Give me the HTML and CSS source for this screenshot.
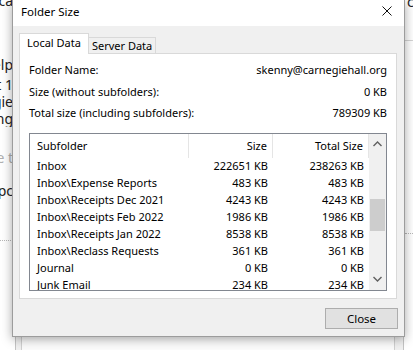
FILE: index.html
```html
<!DOCTYPE html>
<html lang="en">

<head>
  <title>Folder Size</title>
  <meta charset="UTF-8" />
  <meta name="viewport" content="width=device-width,initial-scale=1" />
  <link rel="stylesheet" href="styles.css">
</head>

<body>
  <div class="desktop">
    <!-- window behind the dialog -->
    <div class="backdrop">
      <div class="strip-left">
        <div class="bg-line first"><span>Tools ca</span></div>
        <div class="bg-line help"><span>Help</span></div>
        <div class="bg-line near"><span>Set 1</span></div>
        <div class="bg-line"><span>Carnegie</span></div>
        <div class="bg-line"><span>Pending</span></div>
        <div class="bg-line muted"><span>Stage t</span></div>
        <div class="bg-line group"><span>Groupc</span></div>
        <div class="dots"></div>
      </div>
      <div class="backdrop-main">
        <div class="frame">
          <div class="frame-inner"></div>
        </div>
      </div>
      <div class="strip-right">
        <div class="bg-top">cl</div>
        <div class="rule"></div>
        <div class="dots right"></div>
      </div>
    </div>

    <div class="dialog">
      <div class="titlebar">
        <span class="title">Folder Size</span>
        <svg class="close-x" width="10" height="10" viewBox="0 0 10 10">
          <path d="M0.5 0.5 L9.5 9.5 M9.5 0.5 L0.5 9.5" stroke="#111" stroke-width="1" fill="none" />
        </svg>
      </div>

      <div class="dialog-body">
        <div class="tabs">
          <div class="tab active">Local Data</div>
          <div class="tab">Server Data</div>
        </div>

        <div class="panel">
          <div class="info-row">
            <span>Folder Name:</span>
            <span>skenny@carnegiehall.org</span>
          </div>
          <div class="info-row">
            <span>Size (without subfolders):</span>
            <span>0 KB</span>
          </div>
          <div class="info-row">
            <span>Total size (including subfolders):</span>
            <span>789309 KB</span>
          </div>

          <div class="list">
            <div class="list-cols">
              <div class="list-row list-head">
                <div class="cell name">Subfolder</div>
                <div class="cell num">Size</div>
                <div class="cell num total">Total Size</div>
              </div>
              <div class="list-row">
                <div class="cell name">Inbox</div>
                <div class="cell num">222651 KB</div>
                <div class="cell num total">238263 KB</div>
              </div>
              <div class="list-row">
                <div class="cell name">Inbox\Expense Reports</div>
                <div class="cell num">483 KB</div>
                <div class="cell num total">483 KB</div>
              </div>
              <div class="list-row">
                <div class="cell name">Inbox\Receipts Dec 2021</div>
                <div class="cell num">4243 KB</div>
                <div class="cell num total">4243 KB</div>
              </div>
              <div class="list-row">
                <div class="cell name">Inbox\Receipts Feb 2022</div>
                <div class="cell num">1986 KB</div>
                <div class="cell num total">1986 KB</div>
              </div>
              <div class="list-row">
                <div class="cell name">Inbox\Receipts Jan 2022</div>
                <div class="cell num">8538 KB</div>
                <div class="cell num total">8538 KB</div>
              </div>
              <div class="list-row">
                <div class="cell name">Inbox\Reclass Requests</div>
                <div class="cell num">361 KB</div>
                <div class="cell num total">361 KB</div>
              </div>
              <div class="list-row">
                <div class="cell name">Journal</div>
                <div class="cell num">0 KB</div>
                <div class="cell num total">0 KB</div>
              </div>
              <div class="list-row">
                <div class="cell name">Junk Email</div>
                <div class="cell num">234 KB</div>
                <div class="cell num total">234 KB</div>
              </div>
            </div>

            <div class="scrollbar">
              <svg class="arrow" width="9" height="6" viewBox="0 0 9 6">
                <path d="M0.5 5 L4.5 1 L8.5 5" stroke="#606060" stroke-width="1.4" fill="none" />
              </svg>
              <div class="track">
                <div class="thumb"></div>
              </div>
              <svg class="arrow" width="9" height="6" viewBox="0 0 9 6">
                <path d="M0.5 1 L4.5 5 L8.5 1" stroke="#606060" stroke-width="1.4" fill="none" />
              </svg>
            </div>
          </div>
        </div>

        <div class="footer">
          <button class="btn">Close</button>
        </div>
      </div>
    </div>
  </div>
</body>

</html>
```

FILE: styles.css
```css
* {
  box-sizing: border-box;
}

body,
html {
  margin: 0;
  padding: 0;
  border: 0;
}

body {
  font-family: "Noto Sans", "Open Sans", sans-serif;
  font-size: 11px;
  color: #000;
}

.desktop {
  position: relative;
  width: 413px;
  height: 350px;
  overflow: hidden;
  background: #fff;
}

/* ---- window behind the dialog ---- */

.backdrop {
  display: flex;
  height: 100%;
}

.strip-left {
  width: 13px;
  flex: none;
  display: flex;
  flex-direction: column;
  font-size: 14px;
  color: #222;
}

.bg-line {
  display: flex;
  justify-content: flex-end;
  height: 17px;
  line-height: 17px;
  white-space: nowrap;
  overflow: hidden;
}

.bg-line.first {
  margin-top: -8px;
}

.bg-line.help {
  margin-top: 47px;
}

.bg-line.near {
  margin-top: 3px;
}

.bg-line.muted {
  margin-top: 22px;
  color: #b0b0b0;
}

.bg-line.group {
  margin-top: 16px;
}

.dots {
  margin-top: 41px;
  border-top: 1px dotted #b8b8b8;
}

.backdrop-main {
  flex: 1;
  display: flex;
  flex-direction: column;
  justify-content: flex-end;
}

.frame {
  height: 30px;
  margin: 0 1px 0 2px;
  padding: 0 8px 0 5px;
  border-left: 1px solid #c4c4c4;
  border-right: 1px solid #c4c4c4;
  background: #f0f0f0;
}

.frame-inner {
  height: 100%;
  border-left: 1px solid #d0d0d0;
  border-right: 1px solid #d0d0d0;
  background: #fbfbfb;
}

.strip-right {
  width: 8px;
  flex: none;
  display: flex;
  flex-direction: column;
  font-size: 14px;
  color: #222;
  overflow: hidden;
}

.bg-top {
  margin-top: -7px;
  padding-left: 2px;
  line-height: 17px;
}

.rule {
  margin-top: 30px;
  border-top: 1px solid #d4d4d4;
}

.dots.right {
  margin-top: 192px;
}

/* ---- dialog ---- */

.dialog {
  position: absolute;
  left: 12px;
  top: 0;
  width: 393px;
  height: 337px;
  border: 1px solid #9c9c9c;
  border-top: 0;
  background: #f0f0f0;
  box-shadow: 0 2px 10px rgba(0, 0, 0, 0.35);
  display: flex;
  flex-direction: column;
}

.titlebar {
  height: 26px;
  flex: none;
  background: #fff;
  display: flex;
  align-items: center;
  justify-content: space-between;
  padding: 0 12px 4px 8px;
}

.title {
  font-size: 11.5px;
}

.close-x {
  display: block;
}

.dialog-body {
  flex: 1;
  display: flex;
  flex-direction: column;
  padding: 7px 7px 8px 6px;
}

.tabs {
  display: flex;
  align-items: flex-end;
  height: 20px;
  flex: none;
}

.tab {
  height: 16px;
  line-height: 15px;
  padding: 0 3px;
  border: 1px solid #d9d9d9;
  border-bottom: 0;
  border-left: 0;
  background: #f0f0f0;
  white-space: nowrap;
}

.tab.active {
  height: 21px;
  margin-bottom: -1px;
  line-height: 18px;
  padding: 0 7px;
  border-left: 1px solid #d9d9d9;
  background: #fff;
  position: relative;
}

.panel {
  height: 246px;
  flex: none;
  background: #fff;
  border: 1px solid #d9d9d9;
  padding: 6px 9px 0 9px;
}

.info-row {
  display: flex;
  justify-content: space-between;
  height: 21.5px;
  line-height: 20px;
  white-space: nowrap;
}

.list {
  margin-top: 8px;
  height: 158px;
  border: 1px solid #828790;
  display: flex;
  overflow: hidden;
}

.list-cols {
  flex: 1;
  overflow: hidden;
}

.list-row {
  display: grid;
  grid-template-columns: 159px 84px 96px;
  height: 17px;
  line-height: 16px;
  white-space: nowrap;
}

.list-row.list-head {
  height: 24px;
  line-height: 24px;
}

.list-head .cell {
  border-right: 1px solid #e5e5e5;
}

.cell {
  overflow: hidden;
}

.cell.name {
  padding-left: 7px;
}

.cell.num {
  text-align: right;
  padding-right: 5px;
}

.scrollbar {
  width: 17px;
  flex: none;
  background: #f0f0f0;
  display: flex;
  flex-direction: column;
  align-items: center;
  padding: 7px 0 8px;
}

.track {
  flex: 1;
  width: 100%;
  padding-top: 52px;
}

.thumb {
  height: 32px;
  margin: 0 0 0 1px;
  width: 15px;
  background: #cdcdcd;
}

.footer {
  flex: 1;
  display: flex;
  justify-content: flex-end;
  align-items: flex-start;
  padding-top: 9px;
}

.btn {
  width: 73px;
  height: 21px;
  margin-right: -1px;
  border: 1px solid #adadad;
  background: #e1e1e1;
  font-family: inherit;
  font-size: 11.5px;
  line-height: 17px;
  color: #000;
  padding: 0;
}
```
